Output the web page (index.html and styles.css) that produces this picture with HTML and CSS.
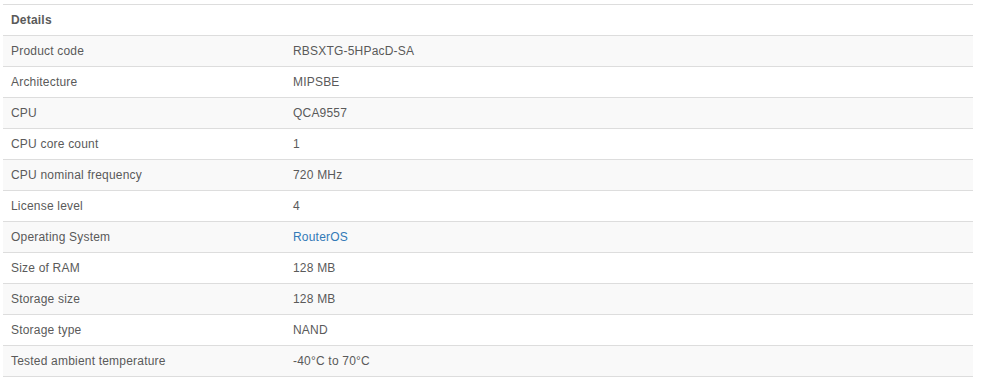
FILE: index.html
```html
<!DOCTYPE html>
<html>
<head>
<meta charset="utf-8">
<link rel="stylesheet" href="styles.css">
</head>
<body>
<div class="wrap">
<table class="specs">
  <thead>
    <tr><th colspan="2">Details</th></tr>
  </thead>
  <tbody>
    <tr><td class="label">Product code</td><td>RBSXTG-5HPacD-SA</td></tr>
    <tr><td class="label">Architecture</td><td>MIPSBE</td></tr>
    <tr><td class="label">CPU</td><td>QCA9557</td></tr>
    <tr><td class="label">CPU core count</td><td>1</td></tr>
    <tr><td class="label">CPU nominal frequency</td><td>720 MHz</td></tr>
    <tr><td class="label">License level</td><td>4</td></tr>
    <tr><td class="label">Operating System</td><td><a class="link" href="#">RouterOS</a></td></tr>
    <tr><td class="label">Size of RAM</td><td>128 MB</td></tr>
    <tr><td class="label">Storage size</td><td>128 MB</td></tr>
    <tr><td class="label">Storage type</td><td>NAND</td></tr>
    <tr><td class="label">Tested ambient temperature</td><td>-40°C to 70°C</td></tr>
  </tbody>
</table>
</div>
</body>
</html>
```
FILE: styles.css
```css
html, body {
  margin: 0;
  padding: 0;
  background: #fff;
}
.wrap {
  padding: 4px 9px 0 3px;
}
.specs {
  width: 970px;
  border-collapse: collapse;
  font-family: "Liberation Sans", Arial, sans-serif;
  font-size: 12px;
  letter-spacing: 0.2px;
  line-height: 18px;
  color: #5a5a5a;
  border-bottom: 1px solid #ddd;
}
.specs th,
.specs td {
  border-top: 1px solid #ddd;
  padding: 6px 8px;
  text-align: left;
  vertical-align: top;
}
.specs th {
  font-weight: bold;
}
.specs td.label {
  width: 266px;
}
.specs tbody tr:nth-child(odd) {
  background: #f9f9f9;
}
.link {
  color: #337ab7;
  text-decoration: none;
}
```
